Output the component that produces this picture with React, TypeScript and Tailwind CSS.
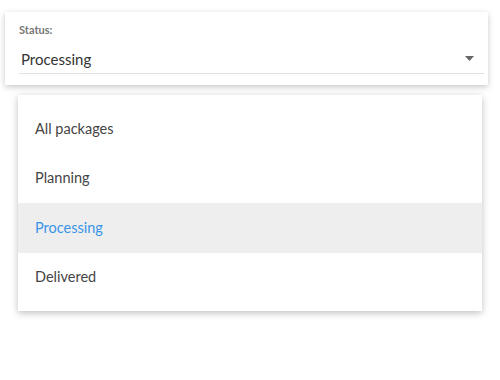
const options = ["All packages", "Planning", "Processing", "Delivered"];

export default function App() {
  const selected = "Processing";
  return (
    <div className="h-[380px] w-[500px] bg-white font-['Lato','Open_Sans',sans-serif]">
      <div className="pt-[12px] pl-[5px]">
        <div className="h-[73px] w-[483px] bg-white pl-[14px] pr-[4px] pt-[11px] shadow-[0_2px_6px_rgba(0,0,0,0.22)]">
          <div className="text-[11px] font-bold leading-[14px] text-[#777]">Status:</div>
          <div className="mt-[9px] flex h-[28px] items-center justify-between border-b border-[#e2e2e2] pl-[2px] pr-[10px]">
            <span className="mb-[2px] text-[15px] leading-[20px] text-[#333]">{selected}</span>
            <svg width="9" height="5" viewBox="0 0 9 5" className="mb-[2px]">
              <path d="M0 0h9L4.5 5z" fill="#666" />
            </svg>
          </div>
        </div>
      </div>
      <div className="ml-[18px] mt-[10px] w-[464px] bg-white py-[9px] shadow-[0_2px_7px_rgba(0,0,0,0.25)]">
        {options.map((option) => (
          <div
            key={option}
            className={
              option === selected
                ? "flex h-[49.5px] items-center bg-[#eeeeee] pl-[17px] text-[14.5px] text-[#3a95e8]"
                : "flex h-[49.5px] items-center pl-[17px] text-[14.5px] text-[#444]"
            }
          >
            {option}
          </div>
        ))}
      </div>
    </div>
  );
}
